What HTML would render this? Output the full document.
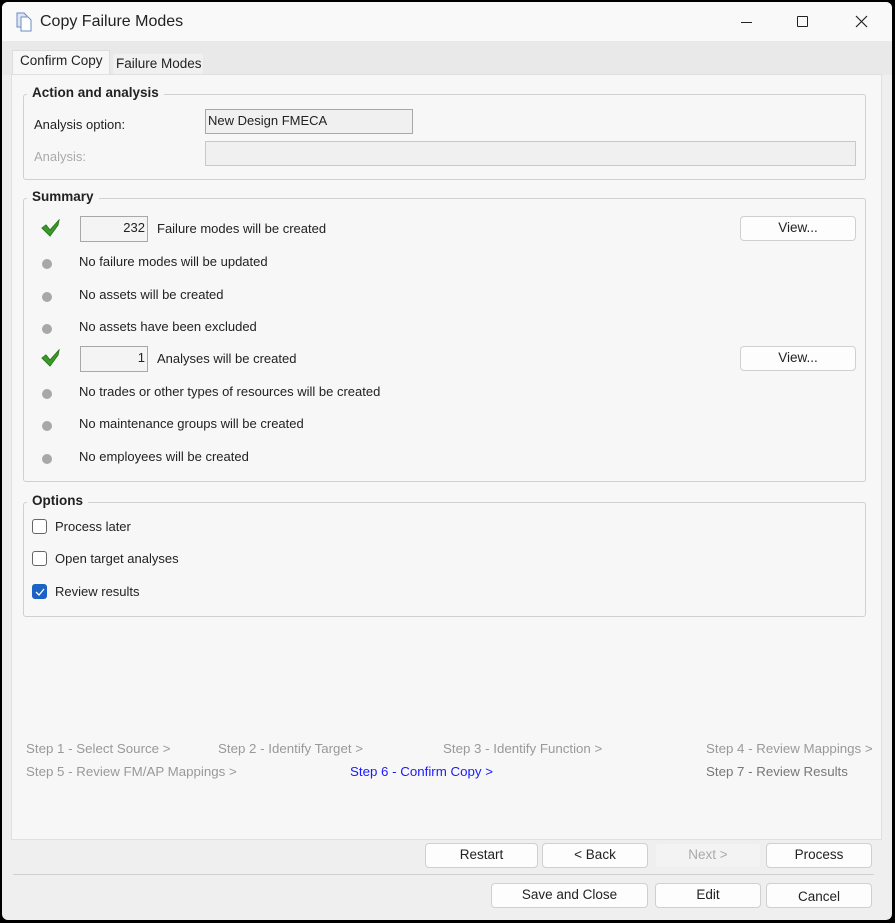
<!DOCTYPE html>
<html><head><meta charset="utf-8"><style>
*{box-sizing:border-box;margin:0;padding:0}
body{width:895px;height:923px;background:#000;font-family:"Liberation Sans",sans-serif;font-size:13px;color:#222;position:relative;overflow:hidden}
.win{position:absolute;left:2px;top:2px;width:890px;height:918px;background:#efefef;border-radius:6px;overflow:hidden}
.title{position:absolute;left:0;top:0;width:890px;height:39px;background:#f9f9f9}
.a{position:absolute;white-space:nowrap}
.panel{position:absolute;left:9px;top:72px;width:871px;height:766px;background:#f7f7f7;border:1px solid #e0e0e0}
.grp{position:absolute;border:1px solid #d0d0d0;border-radius:3px}
.lg{position:absolute;font-weight:bold;background:#f7f7f7;padding:0 5px;font-size:13.5px;color:#222}
.box{position:absolute;border:1px solid #a8a8a8;background:#f4f4f4}
.btn{position:absolute;background:#fdfdfd;border:1px solid #d0d0d0;border-radius:4px;text-align:center;line-height:22px;font-size:13.5px}
.dot{position:absolute;width:10px;height:10px;border-radius:5px;background:#a8a8a8}
.cb{position:absolute;width:15px;height:15px;border:1px solid #666;border-radius:3px;background:#fff}
.step{position:absolute;color:#999;font-size:13.3px;white-space:nowrap}
</style></head><body><div class="win">
<div class="title">
<svg class="a" style="left:12px;top:10px" width="20" height="20" viewBox="0 0 20 20"><path d="M3 1h7l3 3v11H3z" fill="#dde6f3" stroke="#6a8cc4"/><path d="M7 5h7l3 3v11H7z" fill="#fff" stroke="#6a8cc4"/></svg>
<div class="a" style="left:38px;top:11px;font-size:16px">Copy Failure Modes</div>
<div class="a" style="left:739px;top:20px;width:11px;height:1px;background:#222"></div>
<div class="a" style="left:795px;top:14px;width:11px;height:11px;border:1px solid #222;border-radius:1px"></div>
<svg class="a" style="left:853px;top:13px" width="13" height="13"><path d="M1 1L12 12M12 1L1 12" stroke="#222" stroke-width="1.2"/></svg>
</div>
<div class="a" style="left:0;top:39px;width:890px;height:34px;background:#e9e9e9"></div>
<div class="a" style="left:10px;top:48px;width:98px;height:26px;background:#f7f7f7;border:1px solid #ddd;border-bottom:none"></div>
<div class="a" style="left:18px;top:51px;font-size:13.5px">Confirm Copy</div>
<div class="a" style="left:111px;top:52px;width:90px;height:22px;background:#f0f0f0"></div>
<div class="a" style="left:114px;top:54px;font-size:13.5px">Failure Modes</div>
<div class="panel"></div>

<div class="grp" style="left:21px;top:92px;width:843px;height:86px"></div>
<div class="lg" style="left:25px;top:83px">Action and analysis</div>
<div class="a" style="left:32px;top:115px">Analysis option:</div>
<div class="box" style="left:203px;top:107px;width:208px;height:25px;background:#f0f0f0"></div>
<div class="a" style="left:206px;top:111px">New Design FMECA</div>
<div class="a" style="left:32px;top:147px;color:#aaa">Analysis:</div>
<div class="box" style="left:203px;top:139px;width:651px;height:25px;border-color:#c8c8c8;background:#f0f0f0"></div>

<div class="grp" style="left:21px;top:196px;width:843px;height:284px"></div>
<div class="lg" style="left:25px;top:187px">Summary</div>
<svg class="a" style="left:39px;top:217px" width="20" height="18" viewBox="0 0 20 18"><path d="M1 9l4-3 4 5 9-10-1 5-8 11z" fill="#3a9a2a" stroke="#2c7a1c"/></svg>
<div class="box" style="left:78px;top:214px;width:68px;height:26px"></div>
<div class="a" style="left:78px;top:218px;width:65px;text-align:right">232</div>
<div class="a" style="left:155px;top:219px">Failure modes will be created</div>
<div class="btn" style="left:738px;top:214px;width:116px;height:25px">View...</div>
<div class="dot" style="left:40px;top:257px"></div><div class="a" style="left:77px;top:252px">No failure modes will be updated</div>
<div class="dot" style="left:40px;top:290px"></div><div class="a" style="left:77px;top:285px">No assets will be created</div>
<div class="dot" style="left:40px;top:322px"></div><div class="a" style="left:77px;top:317px">No assets have been excluded</div>
<svg class="a" style="left:39px;top:347px" width="20" height="18" viewBox="0 0 20 18"><path d="M1 9l4-3 4 5 9-10-1 5-8 11z" fill="#3a9a2a" stroke="#2c7a1c"/></svg>
<div class="box" style="left:78px;top:344px;width:68px;height:26px"></div>
<div class="a" style="left:78px;top:348px;width:65px;text-align:right">1</div>
<div class="a" style="left:155px;top:349px">Analyses will be created</div>
<div class="btn" style="left:738px;top:344px;width:116px;height:25px">View...</div>
<div class="dot" style="left:40px;top:387px"></div><div class="a" style="left:77px;top:382px">No trades or other types of resources will be created</div>
<div class="dot" style="left:40px;top:419px"></div><div class="a" style="left:77px;top:414px">No maintenance groups will be created</div>
<div class="dot" style="left:40px;top:452px"></div><div class="a" style="left:77px;top:447px">No employees will be created</div>

<div class="grp" style="left:21px;top:500px;width:843px;height:115px"></div>
<div class="lg" style="left:25px;top:491px">Options</div>
<div class="cb" style="left:30px;top:517px"></div><div class="a" style="left:53px;top:517px">Process later</div>
<div class="cb" style="left:30px;top:549px"></div><div class="a" style="left:53px;top:549px">Open target analyses</div>
<div class="cb" style="left:30px;top:582px;background:#1a63c4;border-color:#1a63c4"></div>
<svg class="a" style="left:33px;top:585px" width="10" height="10"><path d="M1 5l3 3 5-6" stroke="#fff" fill="none" stroke-width="1.3"/></svg>
<div class="a" style="left:53px;top:582px">Review results</div>

<div class="step" style="left:24px;top:739px">Step 1 - Select Source &gt;</div>
<div class="step" style="left:216px;top:739px">Step 2 - Identify Target &gt;</div>
<div class="step" style="left:441px;top:739px">Step 3 - Identify Function &gt;</div>
<div class="step" style="left:704px;top:739px">Step 4 - Review Mappings &gt;</div>
<div class="step" style="left:24px;top:762px">Step 5 - Review FM/AP Mappings &gt;</div>
<div class="step" style="left:348px;top:762px;color:#1a1aff">Step 6 - Confirm Copy &gt;</div>
<div class="step" style="left:704px;top:762px;color:#777">Step 7 - Review Results</div>

<div class="btn" style="left:423px;top:841px;width:113px;height:25px">Restart</div>
<div class="btn" style="left:540px;top:841px;width:106px;height:25px">&lt; Back</div>
<div class="btn" style="left:653px;top:841px;width:106px;height:25px;background:#f3f3f3;border-color:#eee;color:#aaa">Next &gt;</div>
<div class="btn" style="left:764px;top:841px;width:106px;height:25px">Process</div>
<div class="a" style="left:11px;top:872px;width:861px;height:1px;background:#d0d0d0"></div>
<div class="btn" style="left:489px;top:881px;width:157px;height:25px">Save and Close</div>
<div class="btn" style="left:653px;top:881px;width:106px;height:25px">Edit</div>
<div class="btn" style="left:764px;top:881px;width:106px;height:25px;line-height:26px">Cancel</div>
</div></body></html>
